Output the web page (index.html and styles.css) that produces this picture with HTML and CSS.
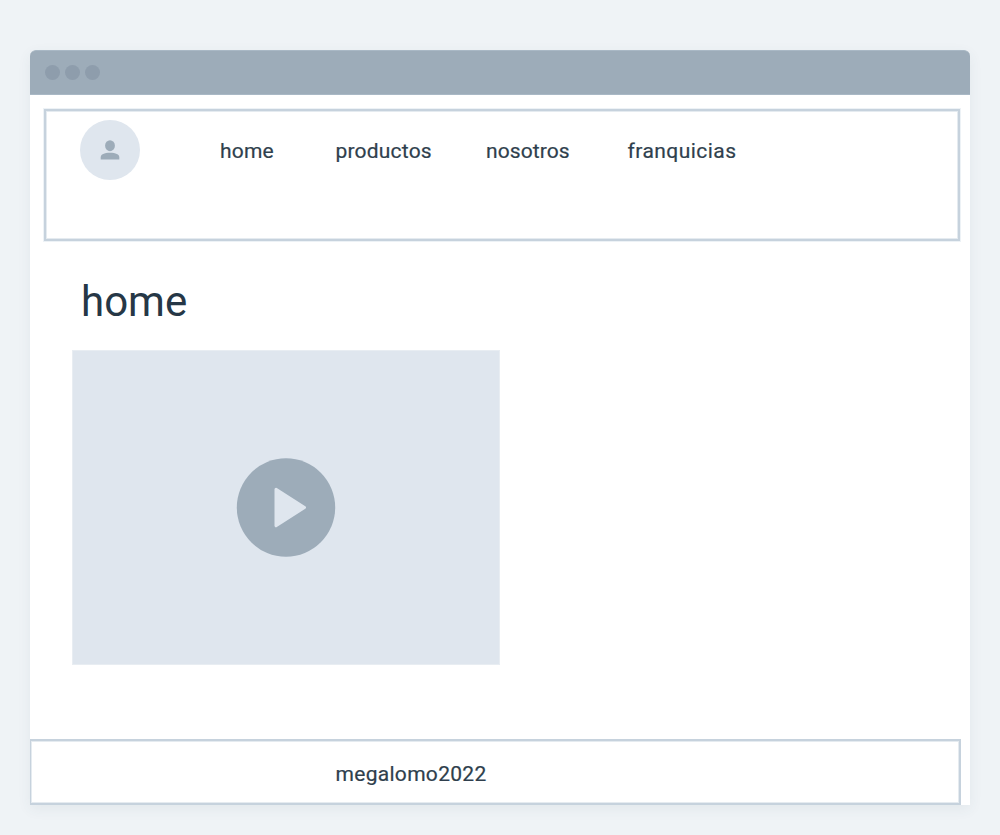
FILE: index.html
```html
<!DOCTYPE html>
<html lang="es">
<head>
<meta charset="utf-8">
<title>megalomo2022</title>
<link rel="stylesheet" href="styles.css">
</head>
<body>
<div class="window">
  <div class="titlebar"><span class="dot"></span><span class="dot"></span><span class="dot"></span></div>
  <header class="header">
    <div class="avatar">
      <svg width="60" height="60" viewBox="0 0 60 60"><ellipse cx="30" cy="25.700" rx="4.900" ry="5.500"/><path d="M20.700 39.400v-2c0-3 3.500-4.600 9.300-4.600s9.300 1.600 9.300 4.600v2z"/></svg>
    </div>
    <nav class="nav">
      <a class="link link-home">home</a>
      <a class="link link-products">productos</a>
      <a class="link link-about">nosotros</a>
      <a class="link link-franchise">franquicias</a>
    </nav>
  </header>
  <main class="main">
    <h1 class="title">home</h1>
    <div class="video">
      <svg width="100" height="100" viewBox="0 0 100 100"><circle class="disc" cx="50" cy="49.500" r="49.200"/><path class="play" d="M40 31.200L68.500 49.500L40 67.800z"/></svg>
    </div>
  </main>
  <footer class="footer"><span class="link link-footer">megalomo2022</span></footer>
</div>
</body>
</html>
```
FILE: styles.css
```css
* { box-sizing: border-box; }
body {
  margin: 0;
  height: 835px;
  padding: 50px 30px 30px;
  background: #eff3f6;
  color: #2f3f4d;
  font-family: Roboto, "Liberation Sans", sans-serif;
}
.window {
  display: flex;
  flex-direction: column;
  height: 755px;
  background: #fff;
  border-radius: 6px 6px 0 0;
  box-shadow: 0 4px 14px rgba(60, 80, 100, 0.07);
}
.titlebar {
  display: flex;
  align-items: center;
  gap: 5px;
  height: 45px;
  padding-left: 15px;
  background: #9dacb9;
  border: 1px solid #a9b8c5;
  border-width: 1px 0;
  border-radius: 6px 6px 0 0;
}
.dot { width: 15px; height: 15px; border-radius: 50%; background: #8e9dac; }
.header {
  display: flex;
  align-items: flex-start;
  height: 132px;
  margin: 14px 10px 0 14px;
  padding: 9px 0 0 34px;
  border: 2px solid #c6d2dd;
  box-shadow: 0 0 0 1px #edf2f6, inset 0 0 0 1px #e5ebf0;
}
.avatar { width: 60px; height: 60px; border-radius: 50%; background: #dfe6ee; }
.avatar svg { display: block; fill: #9dacb9; }
.nav { display: flex; padding: 18px 0 0 80px; }
.link {
  font-size: 21px;
  line-height: 26px;
  white-space: nowrap;
  -webkit-text-stroke: 0.2px currentColor;
}
.link-home { width: 115.500px; letter-spacing: 0.2px; }
.link-products { width: 150.500px; letter-spacing: 0.2px; }
.link-about { width: 141.500px; letter-spacing: 0.1px; }
.link-franchise { letter-spacing: 0.45px; }
.main { flex: 1; padding: 35px 42px 0; }
.title {
  margin: 0 0 22px 9px;
  font-size: 42px;
  line-height: 52px;
  font-weight: 400;
  color: #263746;
}
.video {
  display: flex;
  align-items: center;
  justify-content: center;
  width: 428px;
  height: 315px;
  background: #dfe6ee;
  border: 1px solid #e8edf2;
}
.disc { fill: #9dacb9; }
.play { fill: #dfe6ee; stroke: #dfe6ee; stroke-width: 3px; stroke-linejoin: round; }
.footer {
  height: 66px;
  margin-right: 9px;
  padding: 20px 0 0 304.500px;
  border: 2px solid #c6d2dd;
  border-left-width: 1px;
  box-shadow: inset 0 0 0 1px #e5ebf0;
}
.link-footer { letter-spacing: 0.3px; }
```
